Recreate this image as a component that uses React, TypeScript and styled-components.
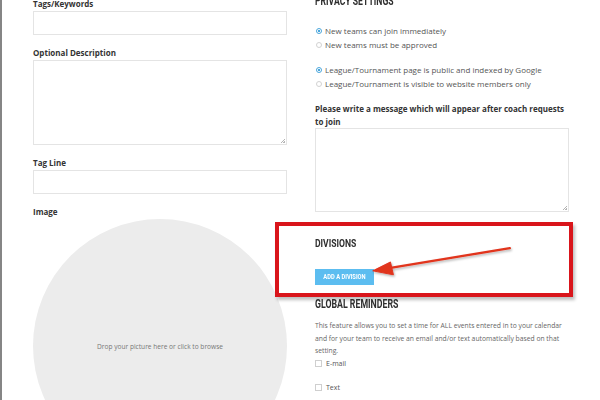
import styled, { createGlobalStyle } from "styled-components"

const GlobalStyle = createGlobalStyle`
  html, body {
    margin: 0;
    padding: 0;
    background: #fff;
  }
  body {
    font-family: "Open Sans", "Liberation Sans", sans-serif;
    color: #444;
  }
`

const Page = styled.div`
  display: grid;
  grid-template-columns: 254px 254px;
  column-gap: 28px;
  align-items: start;
  height: 400px;
  overflow: hidden;
  padding-left: 31px;
  border-left: 2px solid #858585;
  box-sizing: border-box;
`

const Column = styled.div<{ $offset: number }>`
  display: flex;
  flex-direction: column;
  margin-top: ${(p) => p.$offset}px;
`

const Label = styled.div`
  font-size: 8px;
  line-height: 10px;
  font-weight: 700;
  color: #333;
  margin-bottom: 2px;
`

const Input = styled.div<{ $height: number; $gap?: number }>`
  height: ${(p) => p.$height}px;
  border: 1px solid #e4e4e4;
  box-sizing: border-box;
  margin-bottom: ${(p) => p.$gap ?? 13}px;
  position: relative;
`

const Grip = styled.span`
  position: absolute;
  right: 1px;
  bottom: 1px;
  width: 5px;
  height: 5px;
  background: linear-gradient(135deg, transparent 55%, #b5b5b5 55%, #b5b5b5 65%, transparent 65%, transparent 78%, #b5b5b5 78%);
`

const DropZone = styled.div`
  width: 254px;
  height: 254px;
  border-radius: 50%;
  background: #ececec;
  display: flex;
  align-items: center;
  justify-content: center;
  font-size: 6.6px;
  color: #777;
`

// the site's heading face is a narrow display font; Roboto squeezed stands in for it
const Heading = styled.div<{ $size: number; $gap?: number }>`
  height: ${(p) => p.$size}px;
  margin-bottom: ${(p) => p.$gap ?? 0}px;
  font-family: Roboto, "Liberation Sans", sans-serif;
  font-weight: 700;
  font-size: ${(p) => p.$size}px;
  line-height: 1;
  color: #2e2e2e;
  white-space: nowrap;
`

const Squeeze = styled.span<{ $scale: number; $origin?: string }>`
  display: inline-block;
  transform: scaleX(${(p) => p.$scale});
  transform-origin: ${(p) => p.$origin ?? "left"} center;
`

const OptionGroup = styled.div<{ $top?: number }>`
  display: flex;
  flex-direction: column;
  margin-top: ${(p) => p.$top ?? 0}px;
  margin-bottom: 11px;
`

const Option = styled.div`
  display: flex;
  align-items: center;
  gap: 3px;
  height: 14px;
  font-size: 8px;
  color: #555;
`

const Radio = styled.span<{ $on?: boolean }>`
  width: 4px;
  height: 4px;
  border-radius: 50%;
  border: 1px solid ${(p) => (p.$on ? "#4aa6dc" : "#d2d2d2")};
  background: ${(p) => (p.$on ? "radial-gradient(circle, #4aa6dc 42%, #fff 52%)" : "#fff")};
  margin-left: 1px;
  flex: none;
`

const Box = styled.span`
  width: 5px;
  height: 5px;
  border: 1px solid #cfcfcf;
  flex: none;
`

const MessageLabel = styled(Label)`
  line-height: 13px;
  margin-bottom: 0;
`

const Divisions = styled.section`
  position: relative;
  margin: 0 -4px 1px -40px;
  padding: 13px 0 8px 36px;
  border: 4px solid #d9151b;
  box-shadow: 2px 3px 3px rgba(0, 0, 0, 0.25);
`

const AddButton = styled.button`
  display: block;
  margin-top: 20px;
  width: 59px;
  height: 16px;
  border: none;
  padding: 0;
  background: #5cbdf0;
  color: #fff;
  font-family: Roboto, "Liberation Sans", sans-serif;
  font-weight: 700;
  font-size: 7.5px;
  white-space: nowrap;
  overflow: visible;
`

const Arrow = styled.svg`
  position: absolute;
  left: 0;
  top: 0;
  width: 100%;
  height: 100%;
  overflow: visible;
`

const Paragraph = styled.p`
  margin: 10px 0 0;
  font-size: 6.75px;
  line-height: 12.5px;
  color: #666;
`

const CheckRow = styled.div`
  display: flex;
  align-items: center;
  gap: 4px;
  height: 12px;
  margin-bottom: 12px;
  font-size: 7px;
  color: #555;
`

export default function App() {
  return (
    <>
      <GlobalStyle />
      <Page>
        <Column $offset={-1}>
          <Label>Tags/Keywords</Label>
          <Input $height={24} />
          <Label>Optional Description</Label>
          <Input $height={85}>
            <Grip />
          </Input>
          <Label>Tag Line</Label>
          <Input $height={24} />
          <Label>Image</Label>
          <DropZone>Drop your picture here or click to browse</DropZone>
        </Column>

        <Column $offset={-5}>
          <Heading $size={12.7}>
            <Squeeze $scale={0.68}>PRIVACY SETTINGS</Squeeze>
          </Heading>
          <OptionGroup $top={16}>
            <Option>
              <Radio $on />
              New teams can join immediately
            </Option>
            <Option>
              <Radio />
              New teams must be approved
            </Option>
          </OptionGroup>
          <OptionGroup>
            <Option>
              <Radio $on />
              League/Tournament page is public and indexed by Google
            </Option>
            <Option>
              <Radio />
              League/Tournament is visible to website members only
            </Option>
          </OptionGroup>
          <MessageLabel>
            Please write a message which will appear after coach requests to join
          </MessageLabel>
          <Input $height={84} $gap={10}>
            <Grip />
          </Input>

          <Divisions>
            <Heading $size={10}>
              <Squeeze $scale={0.86}>DIVISIONS</Squeeze>
            </Heading>
            <AddButton>
              <Squeeze $scale={0.77} $origin="center">ADD A DIVISION</Squeeze>
            </AddButton>
            <Arrow viewBox="0 0 294 67">
              <defs>
                <filter id="sh" x="-10%" y="-50%" width="120%" height="200%">
                  <feDropShadow dx="1" dy="1.5" stdDeviation="1" floodColor="#000" floodOpacity="0.3" />
                </filter>
              </defs>
              <g filter="url(#sh)" fill="#e1341f" stroke="#e1341f">
                <line x1="234" y1="22" x2="110" y2="42.5" strokeWidth="2.4" strokeLinecap="round" />
                <polygon points="95,45 113,36 116,49" strokeWidth="1" strokeLinejoin="round" />
              </g>
            </Arrow>
          </Divisions>

          <Heading $size={12.7}>
            <Squeeze $scale={0.69}>GLOBAL REMINDERS</Squeeze>
          </Heading>
          <Paragraph>
            This feature allows you to set a time for ALL events entered in to your calendar
            and for your team to receive an email and/or text automatically based on that
            setting.
          </Paragraph>
          <CheckRow>
            <Box />
            E-mail
          </CheckRow>
          <CheckRow>
            <Box />
            Text
          </CheckRow>
        </Column>
      </Page>
    </>
  )
}
